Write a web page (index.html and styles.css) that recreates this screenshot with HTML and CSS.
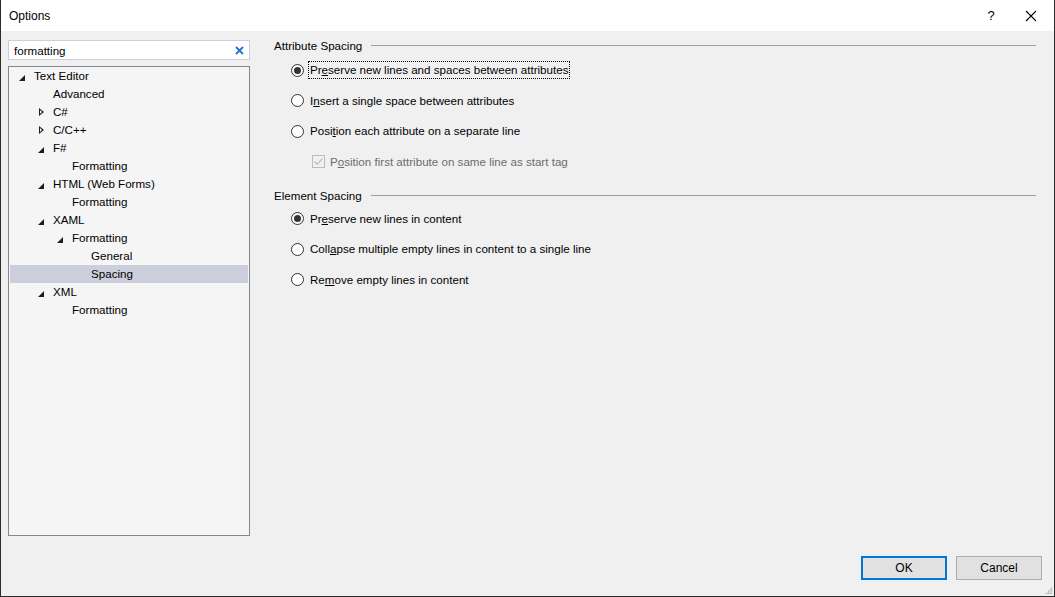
FILE: index.html
```html
<!DOCTYPE html>
<html lang="en">
<head>
  <meta charset="UTF-8">
  <title>Options</title>
  <link rel="stylesheet" href="styles.css">
</head>
<body>
  <div class="window">
    <div class="titlebar">
      <span class="title">Options</span>
      <span class="help">?</span>
      <span class="close">
        <svg width="12" height="12" viewBox="0 0 12 12"><path d="M1 1L11 11M11 1L1 11" stroke="#000" stroke-width="1.1" fill="none"/></svg>
      </span>
    </div>

    <div class="main">
      <div class="sidebar">
        <div class="search">
          <span class="query">formatting</span>
          <svg class="clear" width="9" height="9" viewBox="0 0 9 9"><path d="M1 1L8 8M8 1L1 8" stroke="#1e73d4" stroke-width="1.8" fill="none"/></svg>
        </div>
        <ul class="tree">
          <li class="lv0"><i class="open"></i>Text Editor</li>
          <li class="lv1"><i></i>Advanced</li>
          <li class="lv1"><i class="shut"></i>C#</li>
          <li class="lv1"><i class="shut"></i>C/C++</li>
          <li class="lv1"><i class="open"></i>F#</li>
          <li class="lv2"><i></i>Formatting</li>
          <li class="lv1"><i class="open"></i>HTML (Web Forms)</li>
          <li class="lv2"><i></i>Formatting</li>
          <li class="lv1"><i class="open"></i>XAML</li>
          <li class="lv2"><i class="open"></i>Formatting</li>
          <li class="lv3"><i></i>General</li>
          <li class="lv3 selected"><i></i>Spacing</li>
          <li class="lv1"><i class="open"></i>XML</li>
          <li class="lv2"><i></i>Formatting</li>
        </ul>
      </div>

      <div class="content">
        <div class="group">
          <div class="group-head"><span>Attribute Spacing</span></div>
          <div class="opts">
            <label class="radio checked focus"><b></b><span>Pr<u>e</u>serve new lines and spaces between attributes</span></label>
            <label class="radio"><b></b><span>I<u>n</u>sert a single space between attributes</span></label>
            <label class="radio"><b></b><span>Posi<u>t</u>ion each attribute on a separate line</span></label>
            <label class="check disabled"><b>
              <svg width="11" height="11" viewBox="0 0 11 11"><path d="M1.5 5.5L4.2 8.2L9.5 2.5" stroke="#b5b5b5" stroke-width="1.1" fill="none"/></svg>
            </b><span>P<u>o</u>sition first attribute on same line as start tag</span></label>
          </div>
        </div>

        <div class="group second">
          <div class="group-head"><span>Element Spacing</span></div>
          <div class="opts">
            <label class="radio checked"><b></b><span>Pr<u>e</u>serve new lines in content</span></label>
            <label class="radio"><b></b><span>Coll<u>a</u>pse multiple empty lines in content to a single line</span></label>
            <label class="radio"><b></b><span>Re<u>m</u>ove empty lines in content</span></label>
          </div>
        </div>
      </div>
    </div>

    <div class="footer">
      <button class="btn default">OK</button>
      <button class="btn">Cancel</button>
      <span class="grip"></span>
    </div>
  </div>
</body>
</html>
```

FILE: styles.css
```css
*{
  margin: 0;
  padding: 0;
  box-sizing: border-box;
}
body{
  font-family: "Liberation Sans", Arial, sans-serif;
  font-size: 11.6px;
  color: #000;
  background: #1e1e1e;
}
ul{
  list-style: none;
}

/* window frame */
.window{
  width: 1055px;
  height: 597px;
  background: #f0f0f0;
  border: 1px solid #2b2b2b;
  border-top: none;
  display: flex;
  flex-direction: column;
}

.titlebar{
  height: 31px;
  background: #fff;
  display: flex;
  align-items: center;
  padding-left: 8px;
  font-size: 12px;
}
.title{
  flex: 1;
}
.help{
  width: 20px;
  text-align: center;
  margin-right: 24px;
  font-size: 13px;
}
.close{
  width: 12px;
  height: 12px;
  margin-right: 17px;
  display: flex;
}

.main{
  display: flex;
  height: 505px;
}

/* left side */
.sidebar{
  width: 249px;
  padding-left: 7px;
  padding-top: 9px;
  display: flex;
  flex-direction: column;
  gap: 6px;
}
.search{
  height: 20px;
  background: #fff;
  border: 1px solid #cccedb;
  display: flex;
  align-items: center;
  padding: 0 4px 0 5px;
}
.query{
  flex: 1;
}
.clear{
  margin-right: 1px;
}

.tree{
  height: 470px;
  background: #f5f5f5;
  border: 1px solid #828790;
  padding: 0 1px;
}
.tree li{
  height: 18px;
  line-height: 18px;
  display: flex;
  align-items: center;
  white-space: nowrap;
}
.tree li i{
  width: 15px;
  height: 18px;
  flex-shrink: 0;
  position: relative;
}
.tree .open::before{
  content: "";
  position: absolute;
  left: 0;
  top: 8px;
  border-style: solid;
  border-width: 0 0 6px 6px;
  border-color: transparent transparent #1e1e1e transparent;
}
.tree .shut::before{
  content: "";
  position: absolute;
  left: 1px;
  top: 5px;
  width: 0;
  height: 0;
  border-style: solid;
  border-width: 4px 0 4px 5px;
  border-color: transparent transparent transparent #1e1e1e;
}
.tree .shut::after{
  content: "";
  position: absolute;
  left: 2px;
  top: 7px;
  border-style: solid;
  border-width: 2px 0 2px 2.5px;
  border-color: transparent transparent transparent #f5f5f5;
}
.lv0{ padding-left: 9px; }
.lv1{ padding-left: 28px; }
.lv2{ padding-left: 47px; }
.lv3{ padding-left: 66px; }
.tree li.selected{
  background: #cccedb;
}

/* right side */
.content{
  flex: 1;
  padding-left: 24px;
  padding-right: 18px;
  padding-top: 7px;
}
.group-head{
  display: flex;
  align-items: center;
  height: 16px;
  line-height: 16px;
}
.group-head::after{
  content: "";
  flex: 1;
  height: 1px;
  background: #a0a0a0;
  margin-left: 9px;
  margin-top: -1px;
}
.opts{
  display: flex;
  flex-direction: column;
  gap: 12.5px;
  padding-top: 7px;
  padding-left: 17px;
}
.second{
  margin-top: 17px;
}
.second .opts{
  padding-top: 6px;
}

.radio, .check{
  display: flex;
  align-items: center;
  height: 18px;
}
.radio b{
  width: 13px;
  height: 13px;
  border: 1px solid #333;
  border-radius: 50%;
  background: #fff;
  margin-right: 4px;
  position: relative;
  flex-shrink: 0;
}
.radio.checked b::after{
  content: "";
  position: absolute;
  left: 2px;
  top: 2px;
  width: 7px;
  height: 7px;
  border-radius: 50%;
  background: #333;
}
.radio span, .check span{
  padding: 0 1px;
  line-height: 16px;
  border: 1px dotted transparent;
}
.radio.focus span{
  border-color: #000;
}
.check{
  padding-left: 21px;
}
.check b{
  width: 13px;
  height: 13px;
  border: 1px solid #bcbcbc;
  background: #f0f0f0;
  display: flex;
  align-items: center;
  justify-content: center;
  margin-right: 3px;
}
.check.disabled span{
  color: #6d6d6d;
}

/* buttons */
.footer{
  flex: 1;
  display: flex;
  justify-content: flex-end;
  align-items: flex-start;
  padding-top: 20px;
  padding-right: 12px;
  gap: 9px;
  position: relative;
}
.btn{
  width: 86px;
  height: 24px;
  font: inherit;
  font-size: 12px;
  color: #000;
  background: #e1e1e1;
  border: 1px solid #adadad;
}
.btn.default{
  border: 2px solid #0078d7;
}
.grip{
  position: absolute;
  right: 2px;
  bottom: 2px;
  width: 7px;
  height: 7px;
  background:
    radial-gradient(circle, #b8b8b8 1px, transparent 1.2px) 0 0 / 2.5px 2.5px;
  clip-path: polygon(100% 0, 100% 100%, 0 100%);
}
```
